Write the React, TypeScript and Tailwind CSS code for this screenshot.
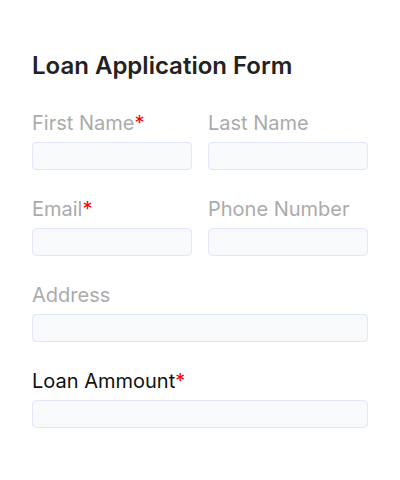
import React from "react";

function Field({ label, required, dark, className }: { label: string; required?: boolean; dark?: boolean; className?: string }) {
  return (
    <div className={"flex flex-col " + (className ?? "")}>
      <label className={"text-xl leading-7 " + (dark ? "text-[#111111]" : "text-[#ababab]")}>
        {label}
        {required && <span className="text-[#ff0000]">*</span>}
      </label>
      <input className="mt-[5px] h-7 w-full rounded-[4px] border border-[#e2e6fb] bg-[#f8f9fb] outline-none" />
    </div>
  );
}

export default function App() {
  return (
    <div className="w-[400px] h-[480px] bg-white px-8 pt-[50px]" style={{ fontFamily: "Inter, 'Noto Sans', sans-serif" }}>
      <h1 className="text-2xl leading-8 font-semibold text-[#222222]">Loan Application Form</h1>
      <div className="mt-[27px] grid grid-cols-2 gap-x-4 gap-y-[25px]">
        <Field label="First Name" required />
        <Field label="Last Name" />
        <Field label="Email" required />
        <Field label="Phone Number" />
        <Field label="Address" className="col-span-2" />
        <Field label="Loan Ammount" required dark className="col-span-2" />
      </div>
    </div>
  );
}
